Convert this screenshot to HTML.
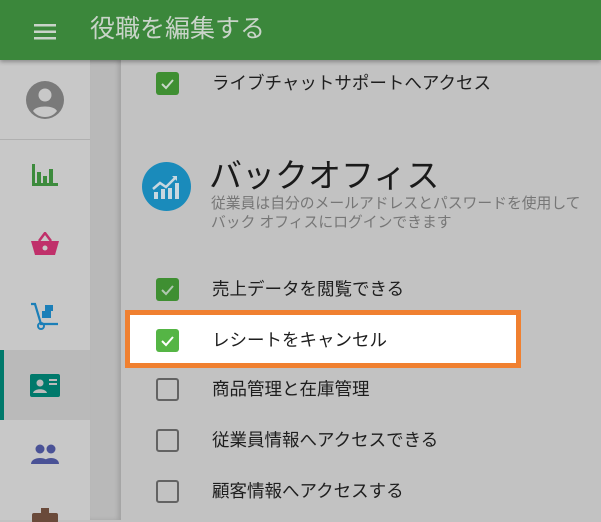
<!DOCTYPE html>
<html><head><meta charset="utf-8"><style>
*{margin:0;padding:0;box-sizing:border-box}
body{width:601px;height:520px;overflow:hidden;background:#c2c2c2;font-family:"Liberation Sans","Noto Sans CJK JP",sans-serif;position:relative}
.hdr{position:absolute;left:0;top:0;width:601px;height:60px;background:#3b873b;box-shadow:0 2px 4px rgba(0,0,0,.3);z-index:3}
.hdr .t{position:absolute;left:90px;top:9px;font-size:25px;color:#c9d4c9}
.side{position:absolute;left:0;top:60px;width:90px;height:460px;background:#c8c8c8}
.gap{position:absolute;left:90px;top:60px;width:31px;height:460px;background:#b9b9b9;box-shadow:inset -3px 0 4px rgba(0,0,0,.12)}
.ico{position:absolute}
.cb{position:absolute;left:156px;width:23px;height:23px;border-radius:3px}
.on{background:#3f8f32}
.off{border:2.5px solid #636363}
.lbl{position:absolute;left:212px;font-size:17.5px;color:#1e1e1e}
</style></head><body>
<div class="hdr">
<svg class="ico" style="left:34px;top:24px" width="22" height="16"><rect y="0" width="22" height="2.5" fill="#c9d4c9"/><rect y="6.5" width="22" height="2.5" fill="#c9d4c9"/><rect y="13" width="22" height="2.5" fill="#c9d4c9"/></svg>
<div class="t">役職を編集する</div></div>
<div class="side"></div>
<div style="position:absolute;left:0;top:139px;width:90px;height:1px;background:#b0b0b0"></div>
<div style="position:absolute;left:0;top:350px;width:90px;height:70px;background:#bababa"></div>
<div style="position:absolute;left:0;top:350px;width:4px;height:70px;background:#00796b"></div>
<div class="gap"></div>
<svg class="ico" style="left:26px;top:81px" width="38" height="38"><circle cx="19" cy="19" r="19" fill="#7a7a7a"/><circle cx="19" cy="14" r="6.5" fill="#c8c8c8"/><path d="M7 30c3-6 21-6 24 0c-3 4-7 6-12 6s-9-2-12-6z" fill="#c8c8c8"/></svg>
<svg class="ico" style="left:32px;top:164px" width="26" height="22" fill="#3d8b3d"><rect x="0" y="0" width="3" height="22"/><rect x="0" y="19" width="26" height="3"/><rect x="5" y="8" width="4" height="12"/><rect x="11" y="12" width="4" height="8"/><rect x="17" y="5" width="4" height="15"/></svg>
<svg class="ico" style="left:31px;top:232px" width="28" height="24" fill="#c0306a"><path d="M8 9l6-8 6 8" stroke="#c0306a" stroke-width="2.5" fill="none"/><path d="M0 9h28l-4 14H4z"/><circle cx="14" cy="16" r="2.5" fill="#c8c8c8"/></svg>
<svg class="ico" style="left:30px;top:302px" width="30" height="28"><path d="M1 2h4l6 20h17" stroke="#1b7fb8" stroke-width="2.2" fill="none"/><rect x="12" y="9" width="9" height="7" fill="#1b7fb8"/><rect x="15" y="3" width="8" height="6" fill="#1b7fb8"/><circle cx="11" cy="24" r="3" fill="none" stroke="#1b7fb8" stroke-width="2"/></svg>
<svg class="ico" style="left:30px;top:374px" width="30" height="23"><rect width="30" height="23" rx="2" fill="#00796b"/><circle cx="10" cy="9" r="3.5" fill="#bababa"/><path d="M3 19c1-5 13-5 14 0z" fill="#bababa"/><rect x="19" y="5" width="8" height="2" fill="#bababa"/><rect x="19" y="9" width="8" height="2" fill="#bababa"/></svg>
<svg class="ico" style="left:31px;top:444px" width="28" height="20" fill="#4a5296"><circle cx="9" cy="5" r="4.5"/><circle cx="20" cy="5" r="4.5"/><path d="M0 20c0-8 18-8 18 0z"/><path d="M12 20c0-8 16-8 16 0z"/></svg>
<svg class="ico" style="left:32px;top:508px" width="26" height="14" fill="#6a4a3a"><rect x="9" y="0" width="8" height="6"/><rect x="0" y="5" width="26" height="10" rx="2"/></svg>

<div class="cb on" style="top:72px"><svg width="23" height="23"><path d="M6 12l4 4 7-8" stroke="#c8d8c8" stroke-width="2" fill="none"/></svg></div>
<div class="lbl" style="top:70px">ライブチャットサポートへアクセス</div>

<svg class="ico" style="left:142px;top:162px" width="49" height="49"><circle cx="24.5" cy="24.5" r="24.5" fill="#1a8bbb"/><path d="M11 27l7-6 6 4 9-9" stroke="#c8d8e0" stroke-width="2.5" fill="none"/><path d="M30 14h5v5z" fill="#c8d8e0"/><rect x="12" y="30" width="4" height="7" fill="#c8d8e0"/><rect x="19" y="27" width="4" height="10" fill="#c8d8e0"/><rect x="26" y="26" width="4" height="11" fill="#c8d8e0"/><rect x="33" y="21" width="4" height="16" fill="#c8d8e0"/></svg>
<div style="position:absolute;left:209px;top:149px;font-size:33px;color:#1a1a1a">バックオフィス</div>
<div style="position:absolute;left:211px;top:195px;font-size:14.8px;line-height:19px;color:#767676">従業員は自分のメールアドレスとパスワードを使用して<br>バック オフィスにログインできます</div>

<div class="cb on" style="top:278px"><svg width="23" height="23"><path d="M6 12l4 4 7-8" stroke="#b0c8b0" stroke-width="2" fill="none"/></svg></div>
<div class="lbl" style="top:276px">売上データを閲覧できる</div>

<div style="position:absolute;left:125px;top:310px;width:396px;height:58px;border:5px solid #f08030;background:#fff"></div>
<div class="cb" style="top:329px;background:#55b545"><svg width="23" height="23"><path d="M6 12l4 4 7-8" stroke="#fff" stroke-width="2" fill="none"/></svg></div>
<div class="lbl" style="top:327px">レシートをキャンセル</div>

<div class="cb off" style="top:378px"></div>
<div class="lbl" style="top:376px">商品管理と在庫管理</div>
<div class="cb off" style="top:429px"></div>
<div class="lbl" style="top:427px">従業員情報へアクセスできる</div>
<div class="cb off" style="top:480px"></div>
<div class="lbl" style="top:478px">顧客情報へアクセスする</div>
</body></html>
